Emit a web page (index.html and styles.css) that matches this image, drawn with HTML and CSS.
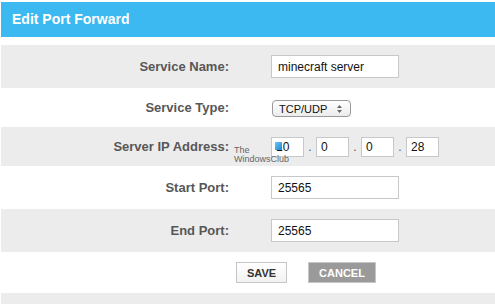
FILE: index.html
```html
<!DOCTYPE html>
<html>
<head>
<meta charset="utf-8">
<link rel="stylesheet" href="styles.css">
</head>
<body>
<div class="page">
  <div class="header">Edit Port Forward</div>
  <div class="form">
    <div class="row gray r43">
      <div class="label">Service Name:</div>
      <div class="field"><div class="input wide">minecraft server</div></div>
    </div>
    <div class="row r39">
      <div class="label">Service Type:</div>
      <div class="field">
        <div class="select"><span>TCP/UDP</span>
          <svg width="5" height="8" viewBox="0 0 5 8"><path d="M0 3 L2.5 0 L5 3 Z M0 5 L2.5 8 L5 5 Z" fill="#666"/></svg>
        </div>
      </div>
    </div>
    <div class="row gray r39 iprow">
      <div class="label">Server IP Address:</div>
      <div class="field ip">
        <div class="input oct">10</div><span class="dot">.</span>
        <div class="input oct">0</div><span class="dot">.</span>
        <div class="input oct">0</div><span class="dot">.</span>
        <div class="input oct">28</div>
      </div>
      <div class="watermark"><span>The</span><span>WindowsClub</span></div>
      <div class="wm-icon"></div>
    </div>
    <div class="row r43">
      <div class="label">Start Port:</div>
      <div class="field"><div class="input wide">25565</div></div>
    </div>
    <div class="row gray r43">
      <div class="label">End Port:</div>
      <div class="field"><div class="input wide">25565</div></div>
    </div>
    <div class="buttons">
      <div class="btn save">SAVE</div>
      <div class="btn cancel">CANCEL</div>
    </div>
    <div class="footer"></div>
  </div>
</div>
</body>
</html>
```

FILE: styles.css
```css
html, body {
  margin: 0;
  padding: 0;
  background: #fff;
}
.page {
  padding-top: 2px;
  margin-left: 1px;
  font-family: "Liberation Sans", Arial, sans-serif;
}
.header {
  height: 35px;
  background: #3bb9f0;
  color: #fff;
  font-weight: bold;
  font-size: 14px;
  line-height: 35px;
  padding-left: 11px;
}
.form {
  margin-top: 8px;
}
.row {
  display: grid;
  grid-template-columns: 228px 1fr;
  column-gap: 42px;
  align-items: center;
  position: relative;
}
.gray { background: #ececec; }
.r43 { height: 43px; }
.r39 { height: 39px; }
.label {
  text-align: right;
  font-weight: bold;
  font-size: 13px;
  color: #575757;
}
.field {
  display: flex;
  align-items: center;
}
.input {
  box-sizing: border-box;
  background: #fff;
  border: 1px solid #c8c8c8;
  font-size: 12px;
  color: #111;
  padding-left: 6px;
  display: flex;
  align-items: center;
}
.wide {
  width: 128px;
  height: 23px;
}
.oct {
  width: 33px;
  height: 20px;
  padding-left: 4px;
}
.dot {
  width: 12px;
  text-align: center;
  font-size: 12px;
  color: #555;
}
.select {
  box-sizing: border-box;
  width: 79px;
  height: 17px;
  margin-left: 1px;
  margin-top: 2px;
  border: 1px solid #9a9a9a;
  border-radius: 4px;
  background: linear-gradient(#ffffff, #ececec);
  display: flex;
  align-items: center;
  justify-content: space-between;
  padding: 0 8px 0 6px;
  font-size: 11px;
  color: #111;
}
.watermark {
  position: absolute;
  left: 233px;
  top: 19px;
  display: flex;
  flex-direction: column;
  font-size: 9px;
  line-height: 9px;
  color: #666;
}
.wm-icon {
  position: absolute;
  left: 274px;
  top: 15px;
  width: 7px;
  height: 8px;
  background: linear-gradient(135deg, #6cc4f4, #1e86d6);
}
.buttons {
  height: 41px;
  display: flex;
  align-items: center;
  padding-left: 235px;
  gap: 21px;
}
.btn {
  box-sizing: border-box;
  height: 21px;
  font-size: 11px;
  font-weight: bold;
  display: flex;
  align-items: center;
  justify-content: center;
}
.save {
  width: 51px;
  border: 1px solid #c6c6c6;
  background: linear-gradient(#ffffff, #f2f2f2);
  color: #333;
}
.cancel {
  width: 68px;
  border: 1px solid #c6c6c6;
  background: #9a9a9a;
  color: #fff;
}
.footer {
  height: 20px;
  background: #ececec;
}
```
